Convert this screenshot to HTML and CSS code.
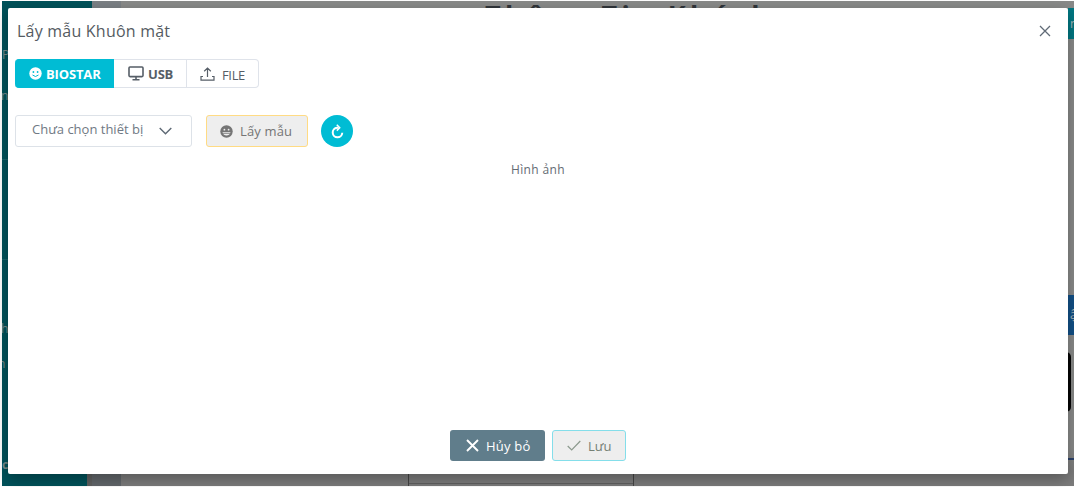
FILE: index.html
```html
<!DOCTYPE html>
<html lang="vi">
<head>
<meta charset="utf-8">
<title>Lấy mẫu Khuôn mặt</title>
<link rel="stylesheet" href="styles.css">
</head>
<body>
<div class="page">
  <aside class="sidebar">
    <span class="nav nav-p">P</span><span class="nav nav-n">n</span><span class="nav nav-h">h</span><span class="nav nav-i">n</span><span class="nav nav-c">c</span>
    <i class="rule rule-a"></i><i class="rule rule-b"></i><i class="scroll"></i>
  </aside>
  <div class="gutter"></div>
  <main class="content">
    <h1 class="heading">Thông Tin Khách</h1>
    <span class="chip chip-teal">n</span>
    <span class="chip chip-blue">ậ</span>
    <span class="frame"></span>
    <span class="line"></span>
    <span class="table"></span>
  </main>
</div>
<section class="modal">
  <header class="head">
    <h2 class="title">Lấy mẫu Khuôn mặt</h2>
    <svg class="close" width="12" height="12" viewBox="0 0 12 12"><path d="M1 1l10 10M11 1L1 11"/></svg>
  </header>
  <div class="tabs">
    <div class="tab active">
      <svg width="13" height="13" viewBox="0 0 13 13"><circle cx="6.5" cy="6.5" r="6.2" fill="#fff"/><g fill="#00bcd4"><circle cx="4.4" cy="5" r=".9"/><circle cx="8.6" cy="5" r=".9"/></g><path d="M3.5 8q3 3 6 0" fill="none" stroke="#00bcd4"/></svg>
      <b class="t-bio">BIOSTAR</b>
    </div>
    <div class="tab usb">
      <svg width="16" height="15" viewBox="0 0 16 15" fill="none" stroke="#565e67" stroke-width="1.6"><rect x="1" y="1" width="14" height="9.6" rx="1"/><path d="M8 10.500v3M4.500 13.800h7"/></svg>
      <b class="t-usb">USB</b>
    </div>
    <div class="tab file">
      <svg width="15" height="14" viewBox="0 0 15 14" fill="none" stroke="#565e67" stroke-width="1.2"><path d="M7.500 10V1M4.200 4.200L7.500 1l3.300 3.200M3 9.500H1v3.700h13V9.500h-2"/></svg>
      <span class="t-file">FILE</span>
    </div>
  </div>
  <div class="tools">
    <div class="select"><span class="t-select">Chưa chọn thiết bị</span>
      <svg width="13" height="8" viewBox="0 0 13 8"><path d="M.7 1l5.800 5.700L12.300 1" fill="none" stroke="#5d6874" stroke-width="1.400"/></svg>
    </div>
    <div class="sample">
      <svg width="13" height="13" viewBox="0 0 13 13"><circle cx="6.500" cy="6.500" r="6.200" fill="#757575"/><g fill="#eee"><circle cx="4.400" cy="4.700" r=".9"/><circle cx="8.600" cy="4.700" r=".9"/></g><path d="M2.500 7.300h8q-1 3.200-4 3.200t-4-3.200z" fill="#eee"/><path d="M2.500 8.500h8" stroke="#757575" stroke-width=".7"/></svg>
      <span class="t-sample">Lấy mẫu</span>
    </div>
    <div class="refresh">
      <svg width="13" height="15" viewBox="0 0 13 15" fill="none" stroke="#fff" stroke-width="2"><path d="M7.500 3.700H6a4.800 4.800 0 1 0 5.300 5.100"/><path d="M5.800.8l2.900 2.900-2.900 2.900" stroke-width="1.500"/></svg>
    </div>
  </div>
  <div class="caption"><span class="t-caption">Hình ảnh</span></div>
  <footer class="foot">
    <div class="cancel">
      <svg width="13" height="13" viewBox="0 0 13 13"><path d="M1 1l11 11M12 1L1 12" stroke="#fff" stroke-width="1.900"/></svg>
      <span class="t-cancel">Hủy bỏ</span>
    </div>
    <div class="save">
      <svg width="14" height="11" viewBox="0 0 14 11"><path d="M.7 6l4 4L13.300 1" fill="none" stroke="#8c9a8e" stroke-width="1.200"/></svg>
      <span class="t-save">Lưu</span>
    </div>
  </footer>
</section>
</body>
</html>
```
FILE: styles.css
```css
* { box-sizing: border-box; }
body { margin: 0; width: 1074px; height: 487px; overflow: hidden; position: relative; background: #fff; color: #565e67; font-family: "Open Sans", "Noto Sans", sans-serif; }
svg { display: block; flex: none; }
span, b, h1, h2 { white-space: nowrap; }

.page { display: flex; height: 487px; padding: 1px 0 1px 2px; }
.sidebar { position: relative; width: 90px; background: #00525a; overflow: hidden; }
.gutter { width: 29px; background: linear-gradient(#7b8085 0 85%, #62676b 98%); }
.content { position: relative; flex: 1; background: linear-gradient(#898a89 0 92%, #7c7c7c 97%); overflow: hidden; }
.nav { position: absolute; left: 0; font-size: 12px; line-height: 14px; color: #778b8c; }
.nav-p { top: 47px; }
.nav-n { top: 88px; left: -1px; }
.nav-h { top: 321px; left: -1px; }
.nav-i { top: 356px; left: -4px; }
.nav-c { top: 457px; font-weight: 700; }
.rule { position: absolute; left: 0; width: 6px; height: 1px; background: #1a646a; }
.rule-a { top: 158px; }
.rule-b { top: 258px; }
.scroll { position: absolute; right: 0; bottom: 0; width: 5px; height: 20px; background: #5f6060; }
.heading { position: absolute; left: 364px; top: -1px; margin: 0; font-size: 27px; line-height: 30px; letter-spacing: 4.4px; color: #30353a; }
.chip { position: absolute; right: 0; width: 6px; color: #a7b5b8; font-size: 12px; overflow: hidden; }
.chip-teal { top: 7px; height: 31px; line-height: 31px; padding-left: 2px; background: #007782; }
.chip-blue { top: 294px; height: 40px; line-height: 40px; padding-left: 2px; background: #125086; }
.frame { position: absolute; right: 3px; top: 351px; width: 8px; height: 60px; background: #050505; border-radius: 0 5px 5px 0; }
.line { position: absolute; right: 0; top: 457px; width: 6px; height: 2px; background: #2c426c; }
.table { position: absolute; left: 287px; top: 470px; width: 226px; height: 16px; border: solid #454545; border-width: 0 1px; background: linear-gradient(#606060, #606060) 0 12px / 100% 1px no-repeat; }

.modal { position: absolute; left: 8px; top: 8px; width: 1060px; height: 466px; display: flex; flex-direction: column; background: #fff; border-radius: 2px; box-shadow: 0 5px 15px rgba(0,0,0,.3); }
.head { display: flex; justify-content: space-between; height: 51px; padding: 0 17px 0 9px; }
.title { margin: 0; padding-top: 12px; font-size: 16px; font-weight: 400; line-height: 22px; letter-spacing: .22px; color: #555b62; }
.close { margin-top: 17px; fill: none; stroke: #606a76; stroke-width: 1.3; }
.tabs { display: flex; height: 29px; margin-left: 7px; }
.tab { display: flex; align-items: center; border: 1px solid #dfe3ea; border-left: 0; background: #fff; font-size: 13px; }
.active { width: 99px; padding-left: 14px; gap: 4px; background: #00bcd4; border-color: #00bcd4; border-radius: 4px 0 0 4px; color: #fff; }
.t-bio { letter-spacing: -.15px; }
.usb { width: 73px; padding-left: 14px; gap: 4px; }
.t-usb { letter-spacing: -.2px; }
.file { width: 72px; padding-left: 13px; gap: 7px; border-radius: 0 4px 4px 0; }
.t-file { padding-top: 2px; letter-spacing: -.35px; }
.tools { display: flex; height: 32px; margin: 27px 0 0 7px; }
.select { display: flex; align-items: center; gap: 16px; width: 177px; padding: 0 0 2px 16px; border: 1px solid #dde2e8; border-radius: 3px; font-size: 13px; color: #707984; }
.select svg { margin-top: 2px; }
.t-select { position: relative; top: -1px; }
.sample { display: flex; align-items: center; gap: 7px; width: 102px; margin-left: 14px; padding-left: 13px; border: 1px solid #ffdb84; border-radius: 3px; background: #eee; font-size: 13px; font-weight: 500; color: #757575; }
.t-sample { letter-spacing: .15px; }
.refresh { display: flex; align-items: center; justify-content: center; width: 32px; height: 32px; margin-left: 13px; border-radius: 50%; background: #00bcd4; }
.caption { display: flex; padding: 14px 0 0 503px; font-size: 12px; line-height: 18px; letter-spacing: .35px; color: #646b73; }
.foot { display: flex; gap: 7px; height: 31px; margin: auto 0 13px 442px; font-size: 13px; }
.cancel { display: flex; align-items: center; gap: 7px; width: 95px; padding-left: 16px; border-radius: 3px; background: #607d8b; color: #fff; font-weight: 500; }
.t-cancel { letter-spacing: .2px; }
.save { display: flex; align-items: center; gap: 7px; width: 74px; padding-left: 14px; border: 1px solid #84deea; border-radius: 3px; background: #eee; color: #758075; font-weight: 500; }
```
